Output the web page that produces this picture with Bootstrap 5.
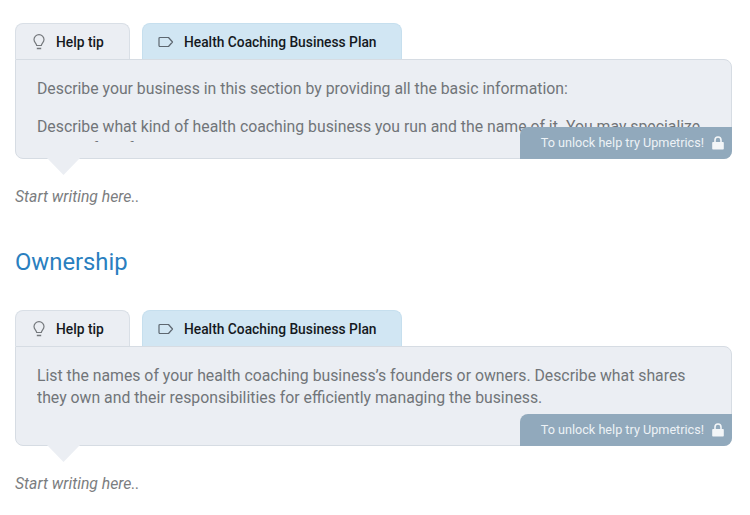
<!DOCTYPE html>
<html lang="en"><head><meta charset="utf-8"><title>Plan</title>
<link href="https://cdn.jsdelivr.net/npm/bootstrap@5.3.0/dist/css/bootstrap.min.css" rel="stylesheet">
<style>
body{font-family:Roboto,sans-serif;background:#fff;color:#6c7075;overflow:hidden}
.page-wrap{padding:23px 18px 0 15px}
.tip-tabs{gap:12px;height:36px;border:0;flex-wrap:nowrap}
.tip-tab{display:flex;align-items:center;height:36px;padding-top:1px;font-size:13.8px;font-weight:500;color:#15191e;border:1px solid #d9dfe6;border-bottom:0;border-radius:8px 8px 0 0;position:relative;z-index:1;white-space:nowrap}
.tab-help{width:115px;padding-left:15px;background:#ebeef3;gap:9px}
.tab-plan{width:260px;padding-left:15px;background:#d1e6f3;border-color:#c6dfee;gap:10px}
.tip-panel{position:relative;height:100px;background:#ebeef3;border:1px solid #d6dce3;border-radius:0 8px 8px 8px;padding:18px 21px 0;font-size:15.8px;line-height:22px;color:#717579}
.tip-clip{height:64px;overflow:hidden}
.tip-clip p{margin:0 0 16px}
.tip-panel::after{content:"";position:absolute;left:31px;bottom:-17px;width:33px;height:17px;background:#ebeef3;clip-path:polygon(0 0,100% 0,50% 100%)}
.unlock-tag{position:absolute;right:-1px;bottom:-1px;width:212px;height:32px;background:#91a9bc;color:#edf2f6;border-radius:8px 0 8px 0;font-size:12.65px;display:flex;align-items:center;justify-content:flex-end;gap:8px;padding-right:8px}
.start-note{font-style:italic;font-size:15.75px;color:#7b7d80;margin:28px 0 0;line-height:20px}
.sect-title{font-size:23.8px;font-weight:400;color:#2a7fc0;line-height:30px;margin:40px 0 33px}
</style></head><body>
<div class="page-wrap">
  <ul class="nav tip-tabs">
    <li class="tip-tab tab-help"><svg width="16" height="18" viewBox="0 0 16 18" fill="none" stroke="#74787c" stroke-width="1.2"><path d="M5.7 12.500C5.500 10.500 3 9.500 3 6.600a5 5 0 0 1 10 0c0 2.900-2.500 3.900-2.700 5.900z"/><path d="M5.800 15.500h4.400" stroke-width="1.500"/></svg>Help tip</li>
    <li class="tip-tab tab-plan"><svg width="16" height="12" viewBox="0 0 16 12" fill="none" stroke="#5d6770" stroke-width="1.200"><path d="M1 2.500a1 1 0 0 1 1-1h8.500l4 4.500-4 4.500H2a1 1 0 0 1-1-1z" stroke-linejoin="round"/></svg>Health Coaching Business Plan</li>
  </ul>
  <div class="tip-panel">
    <div class="tip-clip">
      <p>Describe your business in this section by providing all the basic information:</p>
      <p>Describe what kind of health coaching business you run and the name of it. You may specialize in one of the following health coaching businesses:</p>
    </div>
    <div class="unlock-tag">To unlock help try Upmetrics!<svg width="12" height="14" viewBox="0 0 12 14" fill="#f3f6f8"><path d="M1 6h10a.8.8 0 0 1 .8.8v5.900a.8.800 0 0 1-.8.800H1a.8.800 0 0 1-.8-.8V6.800A.8.800 0 0 1 1 6z"/><path d="M3 6V4a3 3 0 0 1 6 0v2" fill="none" stroke="#f3f6f8" stroke-width="1.600"/></svg></div>
  </div>
  <p class="start-note">Start writing here..</p>
  <h2 class="sect-title">Ownership</h2>
  <ul class="nav tip-tabs">
    <li class="tip-tab tab-help"><svg width="16" height="18" viewBox="0 0 16 18" fill="none" stroke="#74787c" stroke-width="1.2"><path d="M5.7 12.500C5.500 10.500 3 9.500 3 6.600a5 5 0 0 1 10 0c0 2.900-2.500 3.900-2.700 5.900z"/><path d="M5.800 15.500h4.400" stroke-width="1.500"/></svg>Help tip</li>
    <li class="tip-tab tab-plan"><svg width="16" height="12" viewBox="0 0 16 12" fill="none" stroke="#5d6770" stroke-width="1.200"><path d="M1 2.500a1 1 0 0 1 1-1h8.500l4 4.500-4 4.500H2a1 1 0 0 1-1-1z" stroke-linejoin="round"/></svg>Health Coaching Business Plan</li>
  </ul>
  <div class="tip-panel">
    <div class="tip-clip">
      <p>List the names of your health coaching business’s founders or owners. Describe what shares they own and their responsibilities for efficiently managing the business.</p>
    </div>
    <div class="unlock-tag">To unlock help try Upmetrics!<svg width="12" height="14" viewBox="0 0 12 14" fill="#f3f6f8"><path d="M1 6h10a.8.8 0 0 1 .8.8v5.900a.8.800 0 0 1-.8.800H1a.8.800 0 0 1-.8-.8V6.800A.8.800 0 0 1 1 6z"/><path d="M3 6V4a3 3 0 0 1 6 0v2" fill="none" stroke="#f3f6f8" stroke-width="1.600"/></svg></div>
  </div>
  <p class="start-note">Start writing here..</p>
</div>
<script src="https://cdn.jsdelivr.net/npm/bootstrap@5.3.0/dist/js/bootstrap.bundle.min.js"></script>
</body></html>
